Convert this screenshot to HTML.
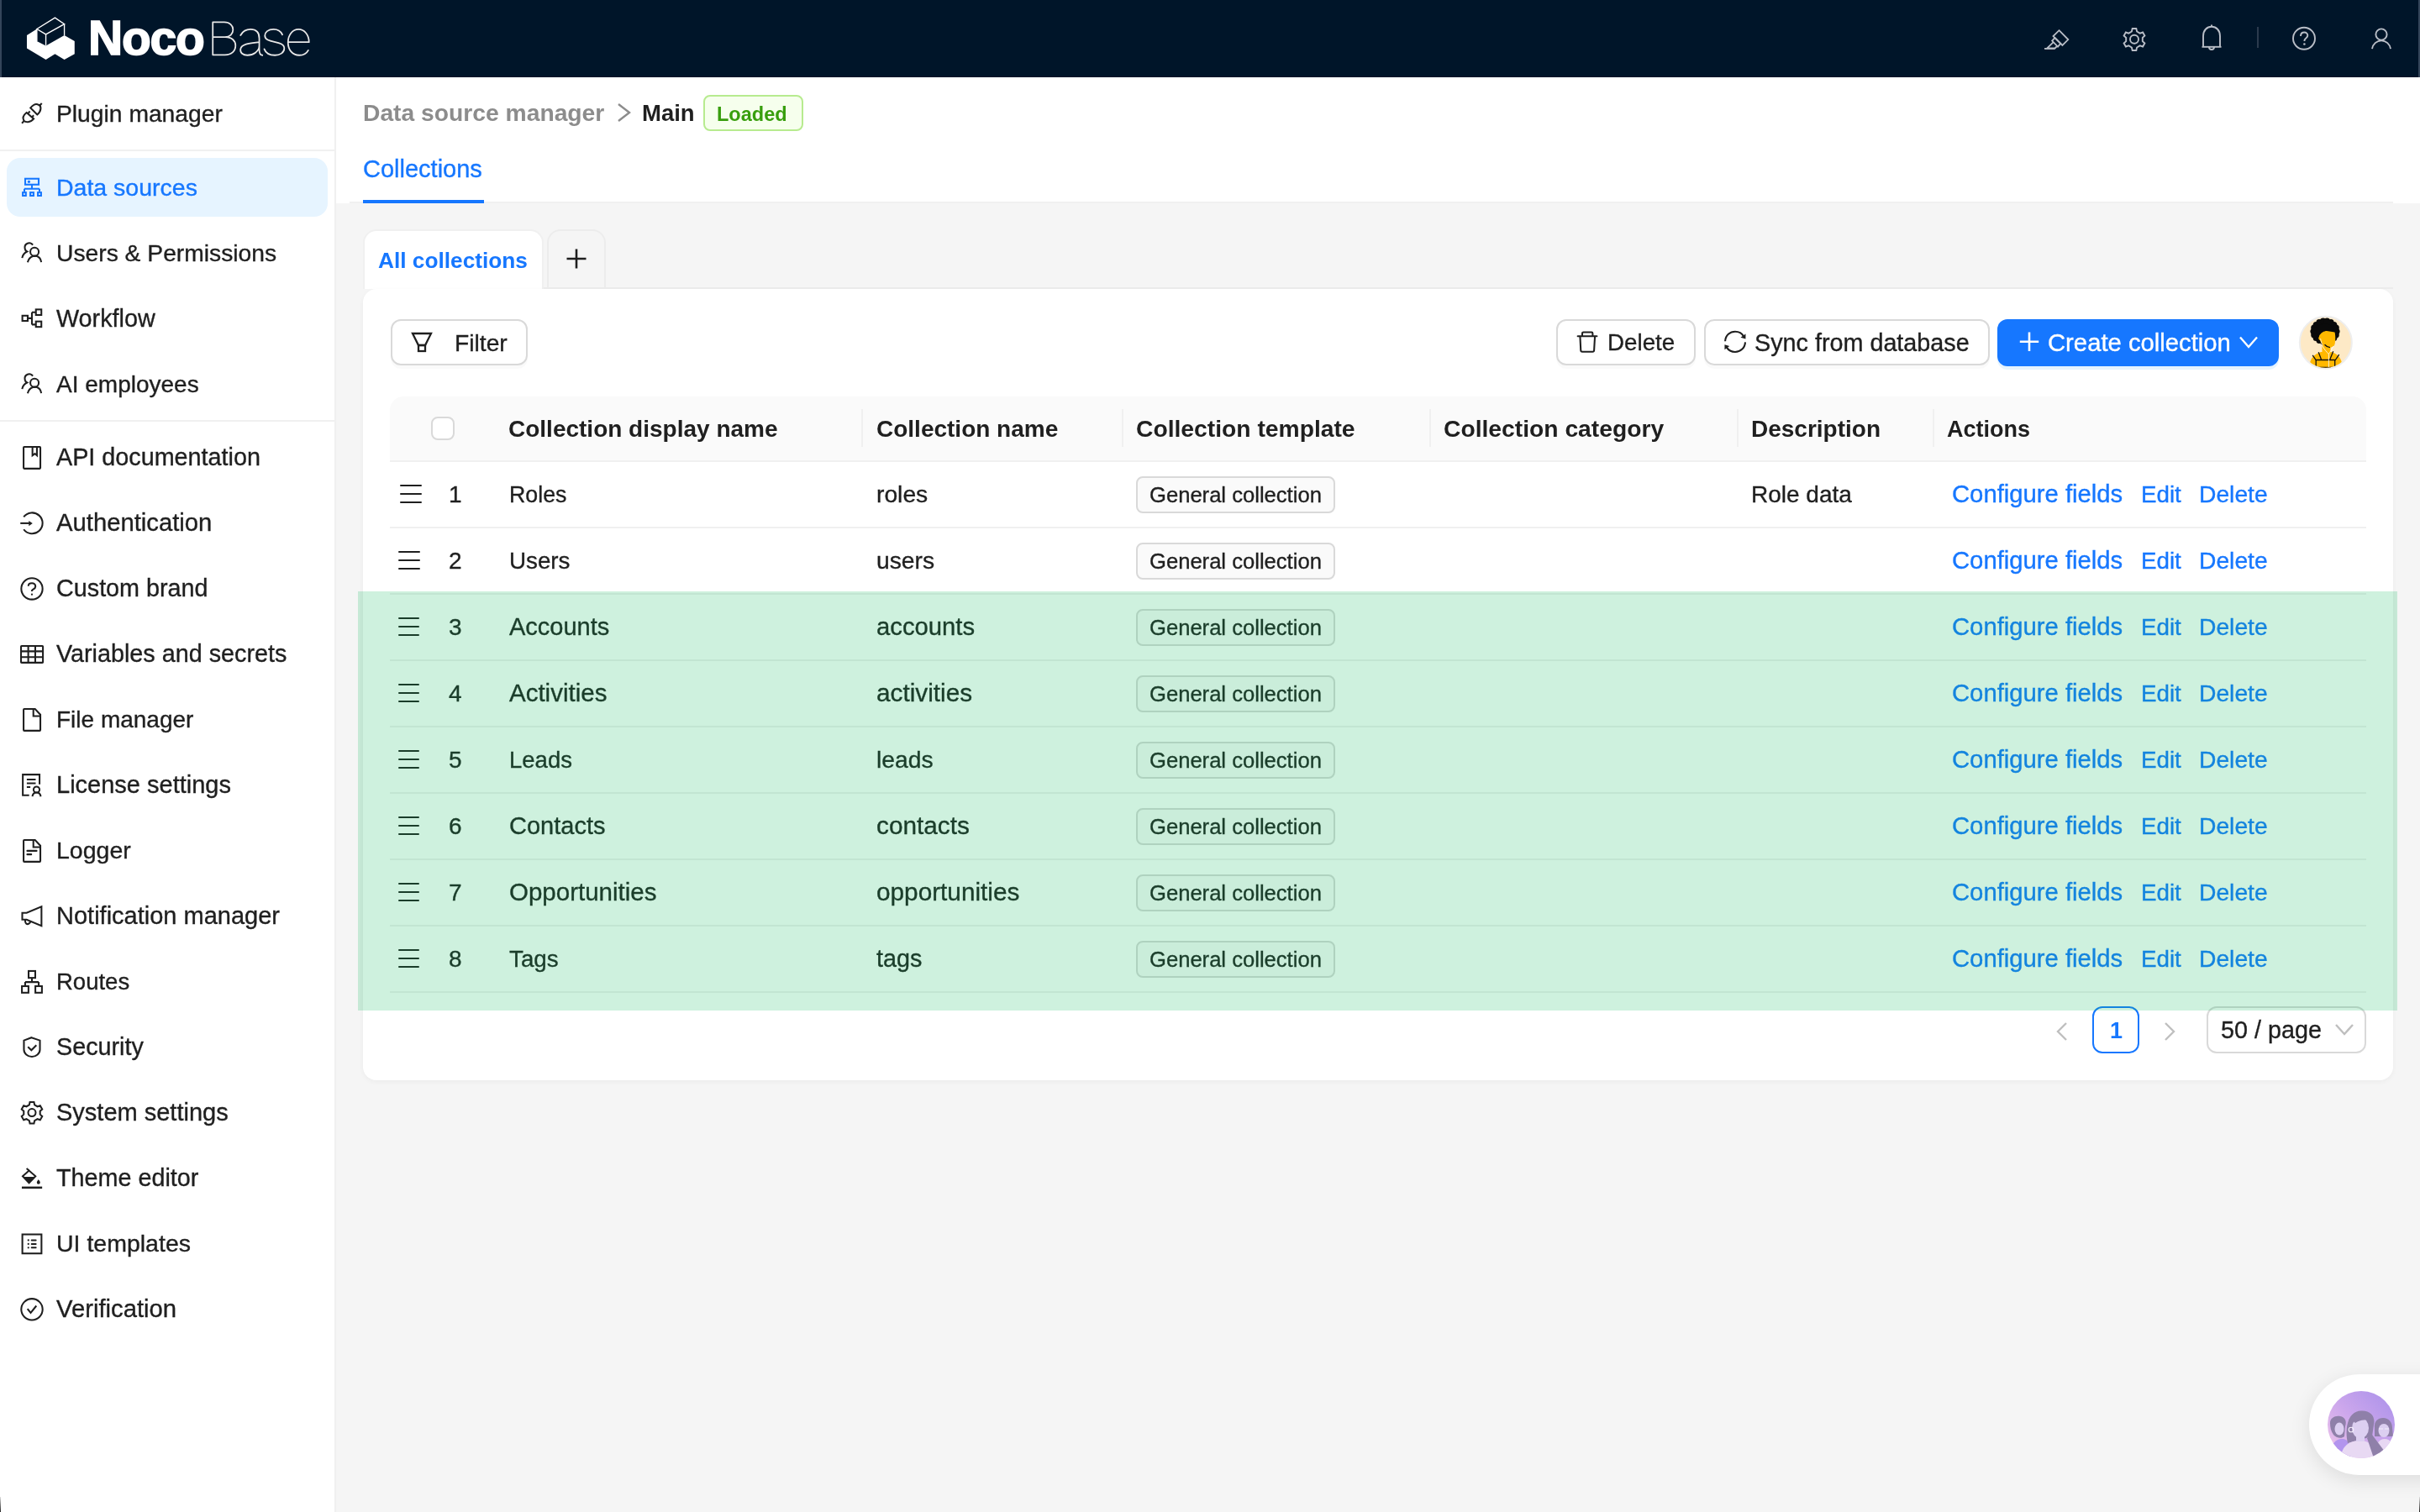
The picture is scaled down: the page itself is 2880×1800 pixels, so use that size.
<!DOCTYPE html><html><head><meta charset="utf-8"><style>
html,body{margin:0;padding:0;}
body{width:2880px;height:1800px;position:relative;overflow:hidden;background:#f5f5f5;font-family:"Liberation Sans",sans-serif;}
.t{position:absolute;white-space:nowrap;line-height:1;will-change:transform;font-family:"Liberation Sans",sans-serif;}
svg{overflow:visible}
</style></head><body>
<div style="position:absolute;left:0px;top:0px;width:2880px;height:92px;background:#001529;"></div>
<div style="position:absolute;left:0px;top:0px;width:2px;height:92px;background:#34455a;"></div>
<div style="position:absolute;left:2878px;top:0px;width:2px;height:92px;background:#34455a;"></div>
<div style="position:absolute;left:0px;top:92px;width:398px;height:1708px;background:#fff;"></div>
<div style="position:absolute;left:398px;top:92px;width:2px;height:1708px;background:#f0f0f0;"></div>
<div style="position:absolute;left:0px;top:178px;width:398px;height:2px;background:#f0f0f0;"></div>
<div style="position:absolute;left:0px;top:500px;width:398px;height:2px;background:#f0f0f0;"></div>
<div style="position:absolute;left:8px;top:188px;width:382px;height:70px;background:#e6f4ff;border-radius:16px;"></div>
<div class="t" style="left:66.60px;top:121px;font-size:28.25px;font-weight:400;color:#1f1f1f;-webkit-text-stroke:0.35px #1f1f1f;">Plugin manager</div>
<div class="t" style="left:66.60px;top:209px;font-size:28.5px;font-weight:400;color:#1677ff;-webkit-text-stroke:0.35px #1677ff;">Data sources</div>
<div class="t" style="left:66.60px;top:287px;font-size:28.25px;font-weight:400;color:#1f1f1f;-webkit-text-stroke:0.35px #1f1f1f;">Users &amp; Permissions</div>
<div class="t" style="left:66.60px;top:365px;font-size:28.75px;font-weight:400;color:#1f1f1f;-webkit-text-stroke:0.35px #1f1f1f;">Workflow</div>
<div class="t" style="left:66.60px;top:444px;font-size:28.0px;font-weight:400;color:#1f1f1f;-webkit-text-stroke:0.35px #1f1f1f;">AI employees</div>
<div class="t" style="left:66.60px;top:530px;font-size:28.75px;font-weight:400;color:#1f1f1f;-webkit-text-stroke:0.35px #1f1f1f;">API documentation</div>
<div class="t" style="left:66.60px;top:608px;font-size:29.25px;font-weight:400;color:#1f1f1f;-webkit-text-stroke:0.35px #1f1f1f;">Authentication</div>
<div class="t" style="left:66.60px;top:686px;font-size:28.75px;font-weight:400;color:#1f1f1f;-webkit-text-stroke:0.35px #1f1f1f;">Custom brand</div>
<div class="t" style="left:66.60px;top:764px;font-size:28.75px;font-weight:400;color:#1f1f1f;-webkit-text-stroke:0.35px #1f1f1f;">Variables and secrets</div>
<div class="t" style="left:66.60px;top:843px;font-size:28.0px;font-weight:400;color:#1f1f1f;-webkit-text-stroke:0.35px #1f1f1f;">File manager</div>
<div class="t" style="left:66.60px;top:920px;font-size:29.0px;font-weight:400;color:#1f1f1f;-webkit-text-stroke:0.35px #1f1f1f;">License settings</div>
<div class="t" style="left:66.60px;top:998px;font-size:28.5px;font-weight:400;color:#1f1f1f;-webkit-text-stroke:0.35px #1f1f1f;">Logger</div>
<div class="t" style="left:66.60px;top:1076px;font-size:29.0px;font-weight:400;color:#1f1f1f;-webkit-text-stroke:0.35px #1f1f1f;">Notification manager</div>
<div class="t" style="left:66.60px;top:1155px;font-size:27.5px;font-weight:400;color:#1f1f1f;-webkit-text-stroke:0.35px #1f1f1f;">Routes</div>
<div class="t" style="left:66.60px;top:1232px;font-size:28.75px;font-weight:400;color:#1f1f1f;-webkit-text-stroke:0.35px #1f1f1f;">Security</div>
<div class="t" style="left:66.60px;top:1310px;font-size:29.0px;font-weight:400;color:#1f1f1f;-webkit-text-stroke:0.35px #1f1f1f;">System settings</div>
<div class="t" style="left:66.60px;top:1388px;font-size:28.75px;font-weight:400;color:#1f1f1f;-webkit-text-stroke:0.35px #1f1f1f;">Theme editor</div>
<div class="t" style="left:66.60px;top:1466px;font-size:28.5px;font-weight:400;color:#1f1f1f;-webkit-text-stroke:0.35px #1f1f1f;">UI templates</div>
<div class="t" style="left:66.60px;top:1544px;font-size:29.25px;font-weight:400;color:#1f1f1f;-webkit-text-stroke:0.35px #1f1f1f;">Verification</div>
<div style="position:absolute;left:400px;top:92px;width:2480px;height:150px;background:#fff;"></div>
<div style="position:absolute;left:416px;top:240px;width:2432px;height:2px;background:#f0f0f0;"></div>
<div style="position:absolute;left:432px;top:238px;width:144px;height:4px;background:#1677ff;"></div>
<div class="t" style="left:432.40px;top:120px;font-size:28.25px;font-weight:700;color:#8c8c8c;">Data source manager</div>
<svg style="position:absolute;left:733px;top:121px;" width="20" height="26" viewBox="0 0 20 26"><polyline points="3,3 16,13 3,23" fill="none" stroke="#8c8c8c" stroke-width="2.4"/></svg>
<div class="t" style="left:764.30px;top:121px;font-size:27.5px;font-weight:700;color:#1f1f1f;">Main</div>
<div style="position:absolute;left:837px;top:113px;width:119px;height:43px;background:#f6ffed;border:2px solid #b7eb8f;border-radius:8px;box-sizing:border-box;"></div>
<div class="t" style="left:853.00px;top:125px;font-size:23.5px;font-weight:700;color:#389e0d;">Loaded</div>
<div class="t" style="left:432.40px;top:187px;font-size:29.0px;font-weight:400;color:#1677ff;-webkit-text-stroke:0.35px #1677ff;">Collections</div>
<div style="position:absolute;left:432px;top:273px;width:215px;height:71px;background:#fff;border:2px solid #f0f0f0;border-bottom:none;border-radius:16px 16px 0 0;box-sizing:border-box;"></div>
<div style="position:absolute;left:651px;top:273px;width:70px;height:71px;background:#f5f5f5;border:2px solid #ececec;border-bottom:none;border-radius:16px 16px 0 0;box-sizing:border-box;"></div>
<div style="position:absolute;left:647px;top:342px;width:2201px;height:2px;background:#ececec;"></div>
<div class="t" style="left:449.50px;top:297px;font-size:26.25px;font-weight:700;color:#1677ff;">All collections</div>
<svg style="position:absolute;left:672px;top:294px;" width="28" height="28" viewBox="0 0 28 28"><path d="M14 2.5V25.5M2.5 14H25.5" stroke="#1f1f1f" stroke-width="2.6" fill="none"/></svg>
<div style="position:absolute;left:432px;top:344px;width:2416px;height:942px;background:#fff;border-radius:16px;box-shadow:0 2px 6px rgba(0,0,0,0.04);"></div>
<div style="position:absolute;left:465px;top:380px;width:163px;height:55px;background:#fff;border:2px solid #d9d9d9;border-radius:12px;box-sizing:border-box;box-shadow:0 4px 0 rgba(0,0,0,0.02);"></div>
<div class="t" style="left:540.70px;top:394px;font-size:28.25px;font-weight:400;color:#1f1f1f;-webkit-text-stroke:0.35px #1f1f1f;">Filter</div>
<div style="position:absolute;left:1852px;top:380px;width:166px;height:55px;background:#fff;border:2px solid #d9d9d9;border-radius:12px;box-sizing:border-box;box-shadow:0 4px 0 rgba(0,0,0,0.02);"></div>
<div class="t" style="left:1912.60px;top:394px;font-size:27.75px;font-weight:400;color:#1f1f1f;-webkit-text-stroke:0.35px #1f1f1f;">Delete</div>
<div style="position:absolute;left:2028px;top:380px;width:340px;height:55px;background:#fff;border:2px solid #d9d9d9;border-radius:12px;box-sizing:border-box;box-shadow:0 4px 0 rgba(0,0,0,0.02);"></div>
<div class="t" style="left:2087.80px;top:394px;font-size:28.75px;font-weight:400;color:#1f1f1f;-webkit-text-stroke:0.35px #1f1f1f;">Sync from database</div>
<div style="position:absolute;left:2377px;top:380px;width:335px;height:56px;background:#1677ff;border-radius:12px;box-shadow:0 4px 0 rgba(5,145,255,0.1);"></div>
<div class="t" style="left:2437.40px;top:394px;font-size:29.25px;font-weight:400;color:#fff;-webkit-text-stroke:0.35px #fff;">Create collection</div>
<div style="position:absolute;left:464px;top:472px;width:2352px;height:78px;background:#fafafa;border-radius:16px 16px 0 0;"></div>
<div style="position:absolute;left:464px;top:548px;width:2352px;height:2px;background:#f0f0f0;"></div>
<div style="position:absolute;left:1025px;top:487px;width:2px;height:45px;background:#f0f0f0;"></div>
<div style="position:absolute;left:1335px;top:487px;width:2px;height:45px;background:#f0f0f0;"></div>
<div style="position:absolute;left:1701px;top:487px;width:2px;height:45px;background:#f0f0f0;"></div>
<div style="position:absolute;left:2067px;top:487px;width:2px;height:45px;background:#f0f0f0;"></div>
<div style="position:absolute;left:2300px;top:487px;width:2px;height:45px;background:#f0f0f0;"></div>
<div style="position:absolute;left:513px;top:496px;width:28px;height:28px;background:#fff;border:2px solid #d9d9d9;border-radius:8px;box-sizing:border-box;"></div>
<div class="t" style="left:605.40px;top:497px;font-size:28.0px;font-weight:700;color:#1f1f1f;">Collection display name</div>
<div class="t" style="left:1042.90px;top:497px;font-size:28.0px;font-weight:700;color:#1f1f1f;">Collection name</div>
<div class="t" style="left:1352.30px;top:496px;font-size:28.25px;font-weight:700;color:#1f1f1f;">Collection template</div>
<div class="t" style="left:1718.00px;top:496px;font-size:28.25px;font-weight:700;color:#1f1f1f;">Collection category</div>
<div class="t" style="left:2084.30px;top:497px;font-size:28.0px;font-weight:700;color:#1f1f1f;">Description</div>
<div class="t" style="left:2317.30px;top:498px;font-size:27.0px;font-weight:700;color:#1f1f1f;">Actions</div>
<div style="position:absolute;left:464px;top:627px;width:2352px;height:2px;background:#f0f0f0;"></div>
<div style="position:absolute;left:476.3px;top:576.75px;width:25.399999999999977px;height:2.5px;background:#1f1f1f;border-radius:1.3px;"></div>
<div style="position:absolute;left:476.3px;top:586.75px;width:25.399999999999977px;height:2.5px;background:#1f1f1f;border-radius:1.3px;"></div>
<div style="position:absolute;left:476.3px;top:596.75px;width:25.399999999999977px;height:2.5px;background:#1f1f1f;border-radius:1.3px;"></div>
<div class="t" style="left:533.50px;top:575px;font-size:28px;font-weight:400;color:#1f1f1f;-webkit-text-stroke:0.35px #1f1f1f;">1</div>
<div class="t" style="left:605.90px;top:576px;font-size:26.75px;font-weight:400;color:#1f1f1f;-webkit-text-stroke:0.35px #1f1f1f;">Roles</div>
<div class="t" style="left:1043.00px;top:574px;font-size:28.25px;font-weight:400;color:#1f1f1f;-webkit-text-stroke:0.35px #1f1f1f;">roles</div>
<div style="position:absolute;left:1352px;top:567px;width:237px;height:44px;background:#fafafa;border:2px solid #d9d9d9;border-radius:8px;box-sizing:border-box;"></div>
<div class="t" style="left:1368.20px;top:577px;font-size:25.6px;font-weight:400;color:#1f1f1f;-webkit-text-stroke:0.35px #1f1f1f;">General collection</div>
<div class="t" style="left:2084.30px;top:575px;font-size:28px;font-weight:400;color:#1f1f1f;-webkit-text-stroke:0.35px #1f1f1f;">Role data</div>
<div class="t" style="left:2323.00px;top:574px;font-size:29.25px;font-weight:400;color:#1677ff;-webkit-text-stroke:0.35px #1677ff;">Configure fields</div>
<div class="t" style="left:2547.60px;top:575px;font-size:27.75px;font-weight:400;color:#1677ff;-webkit-text-stroke:0.35px #1677ff;">Edit</div>
<div class="t" style="left:2617.30px;top:574px;font-size:28.25px;font-weight:400;color:#1677ff;-webkit-text-stroke:0.35px #1677ff;">Delete</div>
<div style="position:absolute;left:464px;top:706px;width:2352px;height:2px;background:#f0f0f0;"></div>
<div style="position:absolute;left:474.3px;top:655.75px;width:25.399999999999977px;height:2.5px;background:#1f1f1f;border-radius:1.3px;"></div>
<div style="position:absolute;left:474.3px;top:665.75px;width:25.399999999999977px;height:2.5px;background:#1f1f1f;border-radius:1.3px;"></div>
<div style="position:absolute;left:474.3px;top:675.75px;width:25.399999999999977px;height:2.5px;background:#1f1f1f;border-radius:1.3px;"></div>
<div class="t" style="left:533.50px;top:654px;font-size:28px;font-weight:400;color:#1f1f1f;-webkit-text-stroke:0.35px #1f1f1f;">2</div>
<div class="t" style="left:605.90px;top:654px;font-size:27.75px;font-weight:400;color:#1f1f1f;-webkit-text-stroke:0.35px #1f1f1f;">Users</div>
<div class="t" style="left:1043.00px;top:653px;font-size:28.25px;font-weight:400;color:#1f1f1f;-webkit-text-stroke:0.35px #1f1f1f;">users</div>
<div style="position:absolute;left:1352px;top:646px;width:237px;height:44px;background:#fafafa;border:2px solid #d9d9d9;border-radius:8px;box-sizing:border-box;"></div>
<div class="t" style="left:1368.20px;top:656px;font-size:25.6px;font-weight:400;color:#1f1f1f;-webkit-text-stroke:0.35px #1f1f1f;">General collection</div>
<div class="t" style="left:2323.00px;top:653px;font-size:29.25px;font-weight:400;color:#1677ff;-webkit-text-stroke:0.35px #1677ff;">Configure fields</div>
<div class="t" style="left:2547.60px;top:654px;font-size:27.75px;font-weight:400;color:#1677ff;-webkit-text-stroke:0.35px #1677ff;">Edit</div>
<div class="t" style="left:2617.30px;top:653px;font-size:28.25px;font-weight:400;color:#1677ff;-webkit-text-stroke:0.35px #1677ff;">Delete</div>
<div style="position:absolute;left:464px;top:785px;width:2352px;height:2px;background:#f0f0f0;"></div>
<div style="position:absolute;left:473.5px;top:734.75px;width:25.399999999999977px;height:2.5px;background:#1f1f1f;border-radius:1.3px;"></div>
<div style="position:absolute;left:473.5px;top:744.75px;width:25.399999999999977px;height:2.5px;background:#1f1f1f;border-radius:1.3px;"></div>
<div style="position:absolute;left:473.5px;top:754.75px;width:25.399999999999977px;height:2.5px;background:#1f1f1f;border-radius:1.3px;"></div>
<div class="t" style="left:533.50px;top:733px;font-size:28px;font-weight:400;color:#1f1f1f;-webkit-text-stroke:0.35px #1f1f1f;">3</div>
<div class="t" style="left:605.90px;top:732px;font-size:29.0px;font-weight:400;color:#1f1f1f;-webkit-text-stroke:0.35px #1f1f1f;">Accounts</div>
<div class="t" style="left:1043.00px;top:732px;font-size:29.25px;font-weight:400;color:#1f1f1f;-webkit-text-stroke:0.35px #1f1f1f;">accounts</div>
<div style="position:absolute;left:1352px;top:725px;width:237px;height:44px;background:#fafafa;border:2px solid #d9d9d9;border-radius:8px;box-sizing:border-box;"></div>
<div class="t" style="left:1368.20px;top:735px;font-size:25.6px;font-weight:400;color:#1f1f1f;-webkit-text-stroke:0.35px #1f1f1f;">General collection</div>
<div class="t" style="left:2323.00px;top:732px;font-size:29.25px;font-weight:400;color:#1677ff;-webkit-text-stroke:0.35px #1677ff;">Configure fields</div>
<div class="t" style="left:2547.60px;top:733px;font-size:27.75px;font-weight:400;color:#1677ff;-webkit-text-stroke:0.35px #1677ff;">Edit</div>
<div class="t" style="left:2617.30px;top:732px;font-size:28.25px;font-weight:400;color:#1677ff;-webkit-text-stroke:0.35px #1677ff;">Delete</div>
<div style="position:absolute;left:464px;top:864px;width:2352px;height:2px;background:#f0f0f0;"></div>
<div style="position:absolute;left:473.5px;top:813.75px;width:25.399999999999977px;height:2.5px;background:#1f1f1f;border-radius:1.3px;"></div>
<div style="position:absolute;left:473.5px;top:823.75px;width:25.399999999999977px;height:2.5px;background:#1f1f1f;border-radius:1.3px;"></div>
<div style="position:absolute;left:473.5px;top:833.75px;width:25.399999999999977px;height:2.5px;background:#1f1f1f;border-radius:1.3px;"></div>
<div class="t" style="left:533.50px;top:812px;font-size:28px;font-weight:400;color:#1f1f1f;-webkit-text-stroke:0.35px #1f1f1f;">4</div>
<div class="t" style="left:605.90px;top:810px;font-size:29.5px;font-weight:400;color:#1f1f1f;-webkit-text-stroke:0.35px #1f1f1f;">Activities</div>
<div class="t" style="left:1043.00px;top:810px;font-size:29.75px;font-weight:400;color:#1f1f1f;-webkit-text-stroke:0.35px #1f1f1f;">activities</div>
<div style="position:absolute;left:1352px;top:804px;width:237px;height:44px;background:#fafafa;border:2px solid #d9d9d9;border-radius:8px;box-sizing:border-box;"></div>
<div class="t" style="left:1368.20px;top:814px;font-size:25.6px;font-weight:400;color:#1f1f1f;-webkit-text-stroke:0.35px #1f1f1f;">General collection</div>
<div class="t" style="left:2323.00px;top:811px;font-size:29.25px;font-weight:400;color:#1677ff;-webkit-text-stroke:0.35px #1677ff;">Configure fields</div>
<div class="t" style="left:2547.60px;top:812px;font-size:27.75px;font-weight:400;color:#1677ff;-webkit-text-stroke:0.35px #1677ff;">Edit</div>
<div class="t" style="left:2617.30px;top:811px;font-size:28.25px;font-weight:400;color:#1677ff;-webkit-text-stroke:0.35px #1677ff;">Delete</div>
<div style="position:absolute;left:464px;top:943px;width:2352px;height:2px;background:#f0f0f0;"></div>
<div style="position:absolute;left:473.5px;top:892.75px;width:25.399999999999977px;height:2.5px;background:#1f1f1f;border-radius:1.3px;"></div>
<div style="position:absolute;left:473.5px;top:902.75px;width:25.399999999999977px;height:2.5px;background:#1f1f1f;border-radius:1.3px;"></div>
<div style="position:absolute;left:473.5px;top:912.75px;width:25.399999999999977px;height:2.5px;background:#1f1f1f;border-radius:1.3px;"></div>
<div class="t" style="left:533.50px;top:891px;font-size:28px;font-weight:400;color:#1f1f1f;-webkit-text-stroke:0.35px #1f1f1f;">5</div>
<div class="t" style="left:605.90px;top:891px;font-size:27.5px;font-weight:400;color:#1f1f1f;-webkit-text-stroke:0.35px #1f1f1f;">Leads</div>
<div class="t" style="left:1043.00px;top:890px;font-size:28.25px;font-weight:400;color:#1f1f1f;-webkit-text-stroke:0.35px #1f1f1f;">leads</div>
<div style="position:absolute;left:1352px;top:883px;width:237px;height:44px;background:#fafafa;border:2px solid #d9d9d9;border-radius:8px;box-sizing:border-box;"></div>
<div class="t" style="left:1368.20px;top:893px;font-size:25.6px;font-weight:400;color:#1f1f1f;-webkit-text-stroke:0.35px #1f1f1f;">General collection</div>
<div class="t" style="left:2323.00px;top:890px;font-size:29.25px;font-weight:400;color:#1677ff;-webkit-text-stroke:0.35px #1677ff;">Configure fields</div>
<div class="t" style="left:2547.60px;top:891px;font-size:27.75px;font-weight:400;color:#1677ff;-webkit-text-stroke:0.35px #1677ff;">Edit</div>
<div class="t" style="left:2617.30px;top:890px;font-size:28.25px;font-weight:400;color:#1677ff;-webkit-text-stroke:0.35px #1677ff;">Delete</div>
<div style="position:absolute;left:464px;top:1022px;width:2352px;height:2px;background:#f0f0f0;"></div>
<div style="position:absolute;left:473.5px;top:971.75px;width:25.399999999999977px;height:2.5px;background:#1f1f1f;border-radius:1.3px;"></div>
<div style="position:absolute;left:473.5px;top:981.75px;width:25.399999999999977px;height:2.5px;background:#1f1f1f;border-radius:1.3px;"></div>
<div style="position:absolute;left:473.5px;top:991.75px;width:25.399999999999977px;height:2.5px;background:#1f1f1f;border-radius:1.3px;"></div>
<div class="t" style="left:533.50px;top:970px;font-size:28px;font-weight:400;color:#1f1f1f;-webkit-text-stroke:0.35px #1f1f1f;">6</div>
<div class="t" style="left:605.90px;top:969px;font-size:29.0px;font-weight:400;color:#1f1f1f;-webkit-text-stroke:0.35px #1f1f1f;">Contacts</div>
<div class="t" style="left:1043.00px;top:968px;font-size:29.75px;font-weight:400;color:#1f1f1f;-webkit-text-stroke:0.35px #1f1f1f;">contacts</div>
<div style="position:absolute;left:1352px;top:962px;width:237px;height:44px;background:#fafafa;border:2px solid #d9d9d9;border-radius:8px;box-sizing:border-box;"></div>
<div class="t" style="left:1368.20px;top:972px;font-size:25.6px;font-weight:400;color:#1f1f1f;-webkit-text-stroke:0.35px #1f1f1f;">General collection</div>
<div class="t" style="left:2323.00px;top:969px;font-size:29.25px;font-weight:400;color:#1677ff;-webkit-text-stroke:0.35px #1677ff;">Configure fields</div>
<div class="t" style="left:2547.60px;top:970px;font-size:27.75px;font-weight:400;color:#1677ff;-webkit-text-stroke:0.35px #1677ff;">Edit</div>
<div class="t" style="left:2617.30px;top:969px;font-size:28.25px;font-weight:400;color:#1677ff;-webkit-text-stroke:0.35px #1677ff;">Delete</div>
<div style="position:absolute;left:464px;top:1101px;width:2352px;height:2px;background:#f0f0f0;"></div>
<div style="position:absolute;left:473.5px;top:1050.75px;width:25.399999999999977px;height:2.5px;background:#1f1f1f;border-radius:1.3px;"></div>
<div style="position:absolute;left:473.5px;top:1060.75px;width:25.399999999999977px;height:2.5px;background:#1f1f1f;border-radius:1.3px;"></div>
<div style="position:absolute;left:473.5px;top:1070.75px;width:25.399999999999977px;height:2.5px;background:#1f1f1f;border-radius:1.3px;"></div>
<div class="t" style="left:533.50px;top:1049px;font-size:28px;font-weight:400;color:#1f1f1f;-webkit-text-stroke:0.35px #1f1f1f;">7</div>
<div class="t" style="left:605.90px;top:1047px;font-size:29.5px;font-weight:400;color:#1f1f1f;-webkit-text-stroke:0.35px #1f1f1f;">Opportunities</div>
<div class="t" style="left:1043.00px;top:1047px;font-size:29.75px;font-weight:400;color:#1f1f1f;-webkit-text-stroke:0.35px #1f1f1f;">opportunities</div>
<div style="position:absolute;left:1352px;top:1041px;width:237px;height:44px;background:#fafafa;border:2px solid #d9d9d9;border-radius:8px;box-sizing:border-box;"></div>
<div class="t" style="left:1368.20px;top:1051px;font-size:25.6px;font-weight:400;color:#1f1f1f;-webkit-text-stroke:0.35px #1f1f1f;">General collection</div>
<div class="t" style="left:2323.00px;top:1048px;font-size:29.25px;font-weight:400;color:#1677ff;-webkit-text-stroke:0.35px #1677ff;">Configure fields</div>
<div class="t" style="left:2547.60px;top:1049px;font-size:27.75px;font-weight:400;color:#1677ff;-webkit-text-stroke:0.35px #1677ff;">Edit</div>
<div class="t" style="left:2617.30px;top:1048px;font-size:28.25px;font-weight:400;color:#1677ff;-webkit-text-stroke:0.35px #1677ff;">Delete</div>
<div style="position:absolute;left:464px;top:1180px;width:2352px;height:2px;background:#f0f0f0;"></div>
<div style="position:absolute;left:473.5px;top:1129.75px;width:25.399999999999977px;height:2.5px;background:#1f1f1f;border-radius:1.3px;"></div>
<div style="position:absolute;left:473.5px;top:1139.75px;width:25.399999999999977px;height:2.5px;background:#1f1f1f;border-radius:1.3px;"></div>
<div style="position:absolute;left:473.5px;top:1149.75px;width:25.399999999999977px;height:2.5px;background:#1f1f1f;border-radius:1.3px;"></div>
<div class="t" style="left:533.50px;top:1128px;font-size:28px;font-weight:400;color:#1f1f1f;-webkit-text-stroke:0.35px #1f1f1f;">8</div>
<div class="t" style="left:605.90px;top:1128px;font-size:27.75px;font-weight:400;color:#1f1f1f;-webkit-text-stroke:0.35px #1f1f1f;">Tags</div>
<div class="t" style="left:1043.00px;top:1127px;font-size:28.75px;font-weight:400;color:#1f1f1f;-webkit-text-stroke:0.35px #1f1f1f;">tags</div>
<div style="position:absolute;left:1352px;top:1120px;width:237px;height:44px;background:#fafafa;border:2px solid #d9d9d9;border-radius:8px;box-sizing:border-box;"></div>
<div class="t" style="left:1368.20px;top:1130px;font-size:25.6px;font-weight:400;color:#1f1f1f;-webkit-text-stroke:0.35px #1f1f1f;">General collection</div>
<div class="t" style="left:2323.00px;top:1127px;font-size:29.25px;font-weight:400;color:#1677ff;-webkit-text-stroke:0.35px #1677ff;">Configure fields</div>
<div class="t" style="left:2547.60px;top:1128px;font-size:27.75px;font-weight:400;color:#1677ff;-webkit-text-stroke:0.35px #1677ff;">Edit</div>
<div class="t" style="left:2617.30px;top:1127px;font-size:28.25px;font-weight:400;color:#1677ff;-webkit-text-stroke:0.35px #1677ff;">Delete</div>
<svg style="position:absolute;left:2444px;top:1214px;" width="20" height="28" viewBox="0 0 20 28"><polyline points="15,4 5,14 15,24" fill="none" stroke="#bfbfbf" stroke-width="2.4"/></svg>
<div style="position:absolute;left:2490px;top:1198px;width:56px;height:56px;background:#fff;border:2px solid #1677ff;border-radius:12px;box-sizing:border-box;"></div>
<div class="t" style="left:2511.00px;top:1214px;font-size:27px;font-weight:700;color:#1677ff;">1</div>
<svg style="position:absolute;left:2572px;top:1214px;" width="20" height="28" viewBox="0 0 20 28"><polyline points="5,4 15,14 5,24" fill="none" stroke="#bfbfbf" stroke-width="2.4"/></svg>
<div style="position:absolute;left:2626px;top:1198px;width:190px;height:56px;background:#fff;border:2px solid #d9d9d9;border-radius:12px;box-sizing:border-box;"></div>
<div class="t" style="left:2642.60px;top:1212px;font-size:28.75px;font-weight:400;color:#1f1f1f;-webkit-text-stroke:0.35px #1f1f1f;">50 / page</div>
<svg style="position:absolute;left:2778px;top:1216px;" width="24" height="20" viewBox="0 0 24 20"><polyline points="2,4 12,15 22,4" fill="none" stroke="#bfbfbf" stroke-width="2.4"/></svg>
<div style="position:absolute;left:426px;top:704px;width:2427px;height:499px;background:rgba(10,185,90,0.2);"></div>
<div style="position:absolute;left:2748px;top:1636px;width:252px;height:120px;background:#fff;border-radius:60px;box-shadow:0 6px 24px rgba(0,0,0,0.10);"></div>
<svg style="position:absolute;left:20px;top:115px;" width="40" height="40" viewBox="0 0 1512 1512"><g fill="none" stroke="#1f1f1f" stroke-width="78" stroke-linecap="butt" stroke-linejoin="miter"><path d="M616,505 L920,810 M920,810 C1120,640 1110,420 980,370 C870,300 740,360 616,505 Z"/><path d="M1030,400 L1125,300"/><path d="M440,720 L760,1000 C600,1190 390,1170 320,1080 C240,960 280,850 440,720 Z"/><path d="M590,660 L510,750 M760,840 L680,930"/><path d="M320,1100 L230,1200"/></g></svg>
<svg style="position:absolute;left:20px;top:203px;" width="40" height="40" viewBox="0 0 1512 1512"><g fill="none" stroke="#1677ff" stroke-width="78" stroke-linecap="butt" stroke-linejoin="miter"><rect x="378" y="368" width="605" height="265"/><path d="M680,633 V825 M340,825 H1020 M340,825 V950 M1020,825 V950"/><rect x="268" y="988" width="140" height="145"/><rect x="608" y="988" width="145" height="145"/><rect x="948" y="988" width="145" height="145"/><circle cx="545" cy="505" r="25" fill="#1677ff"/></g></svg>
<svg style="position:absolute;left:20px;top:281px;" width="40" height="40" viewBox="0 0 1512 1512"><g fill="none" stroke="#1f1f1f" stroke-width="78" stroke-linecap="butt" stroke-linejoin="miter"><path d="M720,400 C670,320 560,300 480,330 C380,370 340,480 370,600 C380,640 420,680 460,700 C330,760 260,860 240,990"/><circle cx="797" cy="712" r="190"/><path d="M490,1180 C520,1040 610,950 720,905 C780,890 860,890 910,905 C1010,940 1080,1040 1100,1180"/></g></svg>
<svg style="position:absolute;left:20px;top:437px;" width="40" height="40" viewBox="0 0 1512 1512"><g fill="none" stroke="#1f1f1f" stroke-width="78" stroke-linecap="butt" stroke-linejoin="miter"><path d="M720,400 C670,320 560,300 480,330 C380,370 340,480 370,600 C380,640 420,680 460,700 C330,760 260,860 240,990"/><circle cx="797" cy="712" r="190"/><path d="M490,1180 C520,1040 610,950 720,905 C780,890 860,890 910,905 C1010,940 1080,1040 1100,1180"/></g></svg>
<svg style="position:absolute;left:20px;top:359px;" width="40" height="40" viewBox="0 0 1512 1512"><g fill="none" stroke="#1f1f1f" stroke-width="78" stroke-linecap="butt" stroke-linejoin="miter"><rect x="250" y="635" width="240" height="235"/><rect x="860" y="355" width="245" height="250"/><rect x="860" y="895" width="245" height="245"/><path d="M490,752 H680 M680,480 V1035 M680,480 H860 M680,1035 H860"/></g></svg>
<svg style="position:absolute;left:20px;top:525px;" width="40" height="40" viewBox="0 0 1512 1512"><g fill="none" stroke="#1f1f1f" stroke-width="78" stroke-linecap="butt" stroke-linejoin="miter"><rect x="305" y="262" width="755" height="980" rx="30"/><path d="M705,270 V650 L815,570 L905,650 V270"/></g></svg>
<svg style="position:absolute;left:20px;top:603px;" width="40" height="40" viewBox="0 0 1512 1512"><g fill="none" stroke="#1f1f1f" stroke-width="78" stroke-linecap="butt" stroke-linejoin="miter"><path d="M310,470 A470,470 0 1,1 310,1030"/><path d="M160,752 H580"/><path d="M540,640 L710,755 L540,880 Z" fill="#1f1f1f" stroke="none"/></g></svg>
<svg style="position:absolute;left:20px;top:681px;" width="40" height="40" viewBox="0 0 1512 1512"><g fill="none" stroke="#1f1f1f" stroke-width="78" stroke-linecap="butt" stroke-linejoin="miter"><circle cx="680" cy="755" r="478"/><path d="M520,630 C520,540 590,500 680,500 C770,500 840,560 840,650 C840,730 770,760 720,790 C690,810 675,830 675,870"/><circle cx="680" cy="1010" r="42" fill="#1f1f1f" stroke="none"/></g></svg>
<svg style="position:absolute;left:20px;top:759px;" width="40" height="40" viewBox="0 0 1512 1512"><g fill="none" stroke="#1f1f1f" stroke-width="78" stroke-linecap="butt" stroke-linejoin="miter"><rect x="190" y="375" width="985" height="755" rx="28"/><path d="M515,375 V1130 M830,375 V1130 M190,620 H1175 M190,880 H1175"/></g></svg>
<svg style="position:absolute;left:20px;top:837px;" width="40" height="40" viewBox="0 0 1512 1512"><g fill="none" stroke="#1f1f1f" stroke-width="78" stroke-linecap="butt" stroke-linejoin="miter"><path d="M820,262 H340 Q305,262 305,297 V1208 Q305,1243 340,1243 H1025 Q1060,1243 1060,1208 V520 Z"/><path d="M745,262 V585 H1060"/></g></svg>
<svg style="position:absolute;left:20px;top:915px;" width="40" height="40" viewBox="0 0 1512 1512"><g fill="none" stroke="#1f1f1f" stroke-width="78" stroke-linecap="butt" stroke-linejoin="miter"><path d="M555,1198 H270 V270 H1022 V710"/><path d="M450,490 H850 M450,660 H850 M450,830 H610"/><circle cx="888" cy="945" r="135"/><path d="M700,1255 C720,1130 800,1080 888,1080 C976,1080 1056,1130 1078,1255"/></g></svg>
<svg style="position:absolute;left:20px;top:993px;" width="40" height="40" viewBox="0 0 1512 1512"><g fill="none" stroke="#1f1f1f" stroke-width="78" stroke-linecap="butt" stroke-linejoin="miter"><path d="M820,262 H340 Q305,262 305,297 V1208 Q305,1243 340,1243 H1025 Q1060,1243 1060,1208 V520 Z"/><path d="M745,262 V585 H1060"/><path d="M470,752 H890 M470,912 H650" stroke-linecap="round"/></g></svg>
<svg style="position:absolute;left:20px;top:1071px;" width="40" height="40" viewBox="0 0 1512 1512"><g fill="none" stroke="#1f1f1f" stroke-width="78" stroke-linecap="butt" stroke-linejoin="miter"><path d="M245,598 H440 L1110,315 V1180 L440,895 H245 Z"/><path d="M380,905 C360,1030 420,1100 480,1100 C540,1100 580,1060 620,990"/></g></svg>
<svg style="position:absolute;left:20px;top:1149px;" width="40" height="40" viewBox="0 0 1512 1512"><g fill="none" stroke="#1f1f1f" stroke-width="78" stroke-linecap="butt" stroke-linejoin="miter"><rect x="530" y="262" width="300" height="310"/><rect x="230" y="945" width="295" height="295"/><rect x="835" y="945" width="295" height="295"/><path d="M680,572 V760 M375,760 H985 M375,760 V945 M985,760 V945"/></g></svg>
<svg style="position:absolute;left:20px;top:1227px;" width="40" height="40" viewBox="0 0 1512 1512"><g fill="none" stroke="#1f1f1f" stroke-width="78" stroke-linecap="butt" stroke-linejoin="miter"><path d="M660,310 L1040,440 V850 C1040,1030 870,1170 680,1170 C480,1170 320,1030 320,850 V440 Z"/><path d="M500,730 L655,880 L880,650"/></g></svg>
<svg style="position:absolute;left:20px;top:1305px;" width="40" height="40" viewBox="0 0 1512 1512"><g fill="none" stroke="#1f1f1f" stroke-width="78" stroke-linecap="butt" stroke-linejoin="miter"><path d="M560.4,389.6 L588.2,263.7 L771.8,263.7 L799.6,389.6 L928.0,463.7 L1050.9,424.8 L1142.7,583.9 L1047.6,670.9 L1047.6,819.1 L1142.7,906.1 L1050.9,1065.2 L928.0,1026.3 L799.6,1100.4 L771.8,1226.3 L588.2,1226.3 L560.4,1100.4 L432.0,1026.3 L309.1,1065.2 L217.3,906.1 L312.4,819.1 L312.4,670.9 L217.3,583.9 L309.1,424.8 L432.0,463.7 Z"/><circle cx="680" cy="740" r="170"/></g></svg>
<svg style="position:absolute;left:20px;top:1383px;" width="40" height="40" viewBox="0 0 1512 1512"><g fill="none" stroke="#1f1f1f" stroke-width="78" stroke-linecap="butt" stroke-linejoin="miter"><path d="M265,655 L550,400 L840,655 L550,955 Z"/><path d="M440,300 L550,400"/><path d="M300,680 H800 L550,955 Z" fill="#1f1f1f" stroke="none"/><path d="M975,790 C1000,840 1050,880 1050,935 A75,75 0 0,1 900,935 C900,880 950,840 975,790 Z" fill="#1f1f1f" stroke="none"/><path d="M225,1165 H1140" stroke-width="95"/></g></svg>
<svg style="position:absolute;left:20px;top:1461px;" width="40" height="40" viewBox="0 0 1512 1512"><g fill="none" stroke="#1f1f1f" stroke-width="78" stroke-linecap="butt" stroke-linejoin="miter"><rect x="250" y="322" width="860" height="858"/><circle cx="520" cy="585" r="42" fill="#1f1f1f" stroke="none"/><circle cx="520" cy="755" r="42" fill="#1f1f1f" stroke="none"/><circle cx="520" cy="920" r="42" fill="#1f1f1f" stroke="none"/><path d="M670,585 H855 M670,755 H855 M670,920 H855" stroke-linecap="round"/></g></svg>
<svg style="position:absolute;left:20px;top:1539px;" width="40" height="40" viewBox="0 0 1512 1512"><g fill="none" stroke="#1f1f1f" stroke-width="78" stroke-linecap="butt" stroke-linejoin="miter"><circle cx="680" cy="750" r="480"/><path d="M480,720 L625,900 L880,585"/></g></svg>
<svg style="position:absolute;left:20px;top:10px;" width="360" height="80" viewBox="0 0 2420 538">
<polygon fill="#fff" points="80,215 160,165 160,262 232,300 380,215 462,262 462,365 380,410 305,365 232,410 80,320"/>
<g fill="none" stroke="#fff" stroke-width="9">
<polygon points="160,165 305,75 380,125 232,208"/>
<path d="M160,165 V262 M232,208 V300 M380,125 V215"/>
</g>
</svg>
<div class="t" style="left:105px;top:17px;font-size:57px;font-weight:700;color:#fff;letter-spacing:-1.2px;-webkit-text-stroke:1.6px #fff">Noco</div>
<svg style="position:absolute;left:20px;top:10px;" width="360" height="80" viewBox="0 0 2420 538"><g fill="none" stroke="#e8e8e8" stroke-width="12" stroke-linejoin="round" stroke-linecap="round">
<path d="M1568,110 V372 H1665 C1720,372 1750,340 1750,298 C1750,258 1720,230 1668,230 H1568 M1568,110 H1660 C1705,110 1730,138 1730,170 C1730,205 1705,230 1665,230"/>
<path d="M1790,215 C1810,180 1840,168 1870,168 C1915,168 1940,195 1940,240 V330 C1940,360 1950,375 1965,375 M1940,270 C1880,278 1800,280 1790,325 C1785,355 1810,375 1845,375 C1890,375 1940,345 1940,300"/>
<path d="M2125,210 C2110,180 2080,168 2055,168 C2010,168 1985,190 1985,218 C1985,285 2140,250 2140,320 C2140,355 2105,375 2065,375 C2020,375 1990,352 1980,325"/>
<path d="M2175,270 H2338 C2338,210 2300,168 2255,168 C2205,168 2170,215 2170,272 C2170,330 2205,375 2260,375 C2295,375 2320,358 2332,335"/>
</g></svg>
<svg style="position:absolute;left:2430px;top:30px;" width="36" height="30" viewBox="0 0 36 30"><g fill="none" stroke="#b9bec7" stroke-width="1.8" stroke-linejoin="miter"><polygon points="20.5,6.2 31.3,17.1 24.4,23.9 13.5,13.1"/><polygon points="15.5,15 22.3,21.8 19,25.6 12.2,18.6"/><polyline points="14,19.8 6,27.5 15.5,27.5 18,25"/><line x1="3" y1="27.9" x2="15.5" y2="27.9"/></g></svg>
<svg style="position:absolute;left:2520px;top:27px;" width="40" height="40" viewBox="0 0 40 40"><g fill="none" stroke="#b9bec7" stroke-width="1.9"><path d="M16.9,10.5 L17.7,7.0 L22.3,7.0 L23.1,10.5 L26.7,12.6 L30.1,11.5 L32.4,15.5 L29.8,17.9 L29.8,22.1 L32.4,24.5 L30.1,28.5 L26.7,27.4 L23.1,29.5 L22.3,33.0 L17.7,33.0 L16.9,29.5 L13.3,27.4 L9.9,28.5 L7.6,24.5 L10.2,22.1 L10.2,17.9 L7.6,15.5 L9.9,11.5 L13.3,12.6 Z"/><circle cx="20" cy="19.8" r="5"/></g></svg>
<svg style="position:absolute;left:2615px;top:26px;" width="34" height="40" viewBox="0 0 34 40"><g fill="none" stroke="#b9bec7" stroke-width="1.9"><path d="M7,29.5 V17 C7,10 11.5,5.8 17,5.8 C22.5,5.8 27,10 27,17 V29.5"/><path d="M5.5,29.8 H28.5"/><path d="M14,30 A3,3 0 0,0 20,30"/><path d="M17,3.6 V5.8"/></g></svg>
<div style="position:absolute;left:2686px;top:32px;width:2px;height:25px;background:#2b3a4d;"></div>
<svg style="position:absolute;left:2722px;top:26px;" width="40" height="40" viewBox="0 0 40 40"><g fill="none" stroke="#b9bec7" stroke-width="1.9"><circle cx="20" cy="19.8" r="13"/><path d="M16,17 C16,14 18,12.5 20.3,12.5 C22.8,12.5 24.3,14.3 24.3,16.3 C24.3,19 21,19.5 20.5,22 V23"/></g><circle cx="20.4" cy="26.5" r="1.3" fill="#b9bec7"/></svg>
<svg style="position:absolute;left:2814px;top:28px;" width="40" height="40" viewBox="0 0 40 40"><g fill="none" stroke="#b9bec7" stroke-width="1.9"><circle cx="20" cy="13" r="6.6"/><path d="M9,30.2 C9.8,24.5 14.5,20.4 20,20.4 C25.5,20.4 30.2,24.5 31,30.2"/></g></svg>
<svg style="position:absolute;left:480px;top:388px;" width="40" height="40" viewBox="0 0 40 40"><g fill="none" stroke="#1f1f1f" stroke-width="2.3" stroke-linejoin="miter"><path d="M11,9 H33 L26,23 H18 Z"/><rect x="18" y="23" width="8" height="7"/></g></svg>
<svg style="position:absolute;left:1870px;top:388px;" width="40" height="40" viewBox="0 0 1512 1512"><g fill="none" stroke="#1f1f1f" stroke-width="78" stroke-linecap="round"><path d="M290,465 H1150"/><path d="M490,440 V340 Q490,285 545,285 H915 Q960,285 960,340 V440"/><path d="M395,480 L425,1095 Q430,1160 490,1160 H960 Q1020,1160 1025,1095 L1060,480"/></g></svg>
<svg style="position:absolute;left:2045px;top:388px;" width="40" height="40" viewBox="0 0 1512 1512"><g fill="none" stroke="#1f1f1f" stroke-width="80"><path d="M305,690 C320,420 520,255 755,255 C920,255 1060,330 1140,470"/><path d="M1210,730 C1190,1000 990,1170 755,1170 C590,1170 450,1090 370,960"/></g><g fill="#1f1f1f"><path d="M1225,360 L1225,590 L1000,520 Z"/><path d="M280,840 L500,910 L280,1070 Z"/></g></svg>
<svg style="position:absolute;left:2400px;top:392px;" width="30" height="30" viewBox="0 0 30 30"><path d="M15,3.5 V26 M3.8,14.8 H26.2" stroke="#fff" stroke-width="2.6" fill="none"/></svg>
<svg style="position:absolute;left:2663px;top:398px;" width="26" height="20" viewBox="0 0 26 20"><polyline points="3,3.5 13,15 23,3.5" fill="none" stroke="#fff" stroke-width="2.4"/></svg>
<svg style="position:absolute;left:2736px;top:375px" width="64" height="66" viewBox="0 0 64 66">
<defs><clipPath id="avc"><circle cx="31.8" cy="32.8" r="30"/></clipPath></defs>
<circle cx="31.8" cy="32.8" r="31" fill="#fde9c6" stroke="#eeeeee" stroke-width="2"/>
<g clip-path="url(#avc)">
<path d="M12,66 C12,52 17,47 26,44 H38 C46,46 52,51 52,66 Z" fill="#ffb800"/>
<path d="M0,62.5 H64" stroke="#111" stroke-width="1.6"/>
<rect x="27.5" y="33" width="10" height="13" fill="#ffb800"/>
<g fill="#0a0a0a"><ellipse cx="31" cy="19.5" rx="14" ry="12.5"/><circle cx="45.0" cy="19.5" r="3.6"/><circle cx="44.2" cy="23.8" r="3.6"/><circle cx="41.7" cy="27.5" r="3.6"/><circle cx="38.0" cy="30.3" r="3.6"/><circle cx="33.4" cy="31.8" r="3.6"/><circle cx="28.6" cy="31.8" r="3.6"/><circle cx="24.0" cy="30.3" r="3.6"/><circle cx="20.3" cy="27.5" r="3.6"/><circle cx="17.8" cy="23.8" r="3.6"/><circle cx="17.0" cy="19.5" r="3.6"/><circle cx="17.8" cy="15.2" r="3.6"/><circle cx="20.3" cy="11.5" r="3.6"/><circle cx="24.0" cy="8.7" r="3.6"/><circle cx="28.6" cy="7.2" r="3.6"/><circle cx="33.4" cy="7.2" r="3.6"/><circle cx="38.0" cy="8.7" r="3.6"/><circle cx="41.7" cy="11.5" r="3.6"/><circle cx="44.2" cy="15.2" r="3.6"/></g>
<path d="M24,25 C26,21 30,19 33,19 L42.5,20.5 C43.5,24 43.5,31 42.5,35 C41.5,38 38,39 35,38.5 C31,38 28,36 26.5,33 C25,31 24,28 24,25 Z" fill="#ffb800"/>
<ellipse cx="25.5" cy="27.5" rx="2.2" ry="2.6" fill="#ffb800"/>
<path d="M30.5,35.3 C32.5,37.5 35,38.5 37,38.6" stroke="#111" stroke-width="1.4" fill="none"/>
<g stroke="#111" stroke-width="1.3" fill="none"><path d="M16.2,47.8 L20.2,53.8 V62 M23.2,44.2 L26.5,53.1 M40.7,43.2 L36.8,53.1 M47.7,47.2 L42.7,54.4 V62 M20.2,53.5 H42.7"/></g>
<g stroke="#fff" stroke-width="0.8" fill="none"><path d="M25.5,28 C26.5,31 27,35 28.2,37.2 C30,41 33,44 35.4,46.5 V62 M40.7,37.2 C39,41 37,44 35.4,46.5"/></g>
</g></svg>
<svg style="position:absolute;left:2770px;top:1656px" width="80" height="80" viewBox="0 0 80 80">
<defs><linearGradient id="pg" x1="0" y1="1" x2="1" y2="0"><stop offset="0" stop-color="#f2c8ea"/><stop offset="0.5" stop-color="#cba6ec"/><stop offset="1" stop-color="#a890ea"/></linearGradient>
<clipPath id="pc"><circle cx="40" cy="40" r="40"/></clipPath></defs>
<circle cx="40" cy="40" r="40" fill="url(#pg)"/>
<g clip-path="url(#pc)">
<path d="M3,80 C3,64 9,57 17,57 C24,57 28,62 28,80 Z" fill="#b294ee"/>
<path d="M3,38 C3,32 9,29 15,30 C21,31 23,36 21,42 L20,54 C17,57 10,56 7,52 C4,48 3,43 3,38 Z" fill="#8f80a9"/>
<ellipse cx="14" cy="45" rx="5.5" ry="7.5" fill="#dccff1"/>
<path d="M56,80 C56,64 61,57 68,57 C75,57 80,64 80,80 Z" fill="#e7d7f3"/>
<path d="M56,44 C55,36 60,32 66,32 C73,32 77,37 77,44 L78,54 L56,54 Z" fill="#8f80a9"/>
<ellipse cx="67" cy="47" rx="6.5" ry="8" fill="#dccff1"/>
<path d="M24,62 C20,44 24,24 40,23.5 C52,23 57,31 55,40 L53,54 L24,62 Z" fill="#8f80a9"/>
<path d="M16,80 C16,66 26,59 38,59 C50,59 58,66 58,80 Z" fill="#e8d9f3"/>
<path d="M34,50 L34,60 H44 L44,50 Z" fill="#dccff1"/>
<ellipse cx="39" cy="44" rx="10" ry="12.5" fill="#dccff1"/>
<path d="M28,34 C31,27 46,25 52,33 C47,35 40,33 33,38 Z" fill="#8f80a9"/>
<path d="M47,56 L53,52 L68,72 L61,80 L55,80 Z" fill="#8f80a9"/>
<circle cx="28" cy="46" r="2.8" fill="none" stroke="#f4eefc" stroke-width="1.1"/>
<path d="M61,45 h5 M68,45 h5" stroke="#f4eefc" stroke-width="1" fill="none"/>
</g></svg>
<div style="position:absolute;left:2879px;top:1782px;width:1px;height:18px;background:linear-gradient(#e0e0e0,#222);"></div>
<div style="position:absolute;left:0px;top:1782px;width:1px;height:18px;background:linear-gradient(#e0e0e0,#222);"></div>
</body></html>
